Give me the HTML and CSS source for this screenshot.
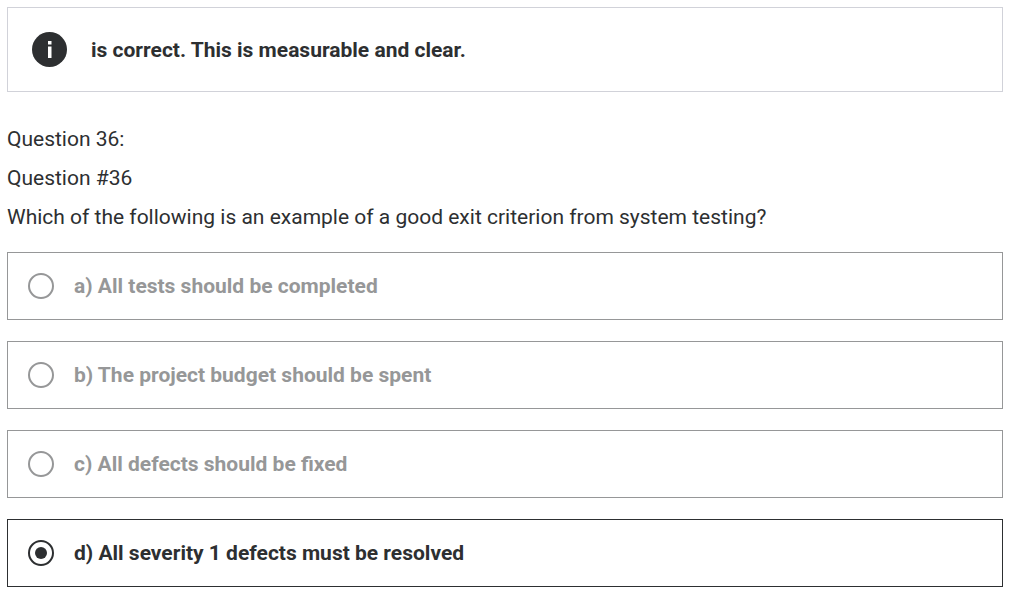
FILE: index.html
```html
<!DOCTYPE html>
<html lang="en">
<head>
<meta charset="utf-8">
<title>Question 36</title>
<link rel="stylesheet" href="styles.css">
</head>
<body>
<main class="quiz">
  <section class="notice">
    <svg class="notice-icon" viewBox="0 0 35 35" aria-hidden="true">
      <circle cx="17.5" cy="17.5" r="17.5" fill="#2d2f31"/>
      <path d="M16 9h3.5v3.5H16zM16 14.5h3.5V26H16z" fill="#fff"/>
    </svg>
    <p class="notice-text">is correct. This is measurable and clear.</p>
  </section>
  <form class="question">
    <div class="prompt">
      <p class="line">Question 36:</p>
      <p class="line">Question #36</p>
      <p class="line" id="ask">Which of the following is an example of a good exit criterion from system testing?</p>
    </div>
    <div class="answers" role="radiogroup" aria-labelledby="ask">
      <label class="answer"><input class="radio" type="radio" name="answer" disabled><span>a) All tests should be completed</span></label>
      <label class="answer"><input class="radio" type="radio" name="answer" disabled><span>b) The project budget should be spent</span></label>
      <label class="answer"><input class="radio" type="radio" name="answer" disabled><span>c) All defects should be fixed</span></label>
      <label class="answer selected"><input class="radio" type="radio" name="answer" checked><span>d) All severity 1 defects must be resolved</span></label>
    </div>
  </form>
</main>
</body>
</html>
```

FILE: styles.css
```css
* { box-sizing: border-box; }
body {
  margin: 0;
  background: #fff;
  color: #2d2f31;
  font-family: Roboto, Arial, sans-serif;
  font-size: 21px;
  line-height: 28px;
}
p { margin: 0; }
.quiz { padding: 7px 30px 15px 7px; }
.notice {
  display: flex;
  align-items: center;
  gap: 24px;
  padding: 24px;
  border: 1px solid #d1d2d9;
}
.notice-icon { width: 35px; height: 35px; flex: none; }
.notice-text { font-weight: 700; }
.question { margin-top: 33px; }
.prompt { display: grid; gap: 11px; }
.answers { display: grid; gap: 21px; margin-top: 21px; }
.answer {
  display: flex;
  align-items: center;
  gap: 20px;
  padding: 19px 20px;
  border: 1px solid #969798;
  color: #969798;
  font-weight: 700;
}
.radio {
  appearance: none;
  display: grid;
  place-items: center;
  flex: none;
  width: 26px;
  height: 26px;
  margin: 0;
  border: 2px solid #969798;
  border-radius: 50%;
}
.selected { border-color: #2d2f31; color: #2d2f31; }
.selected .radio { border-color: #2d2f31; }
.radio:checked::before {
  content: "";
  width: 12px;
  height: 12px;
  border-radius: 50%;
  background: #2d2f31;
}
```
